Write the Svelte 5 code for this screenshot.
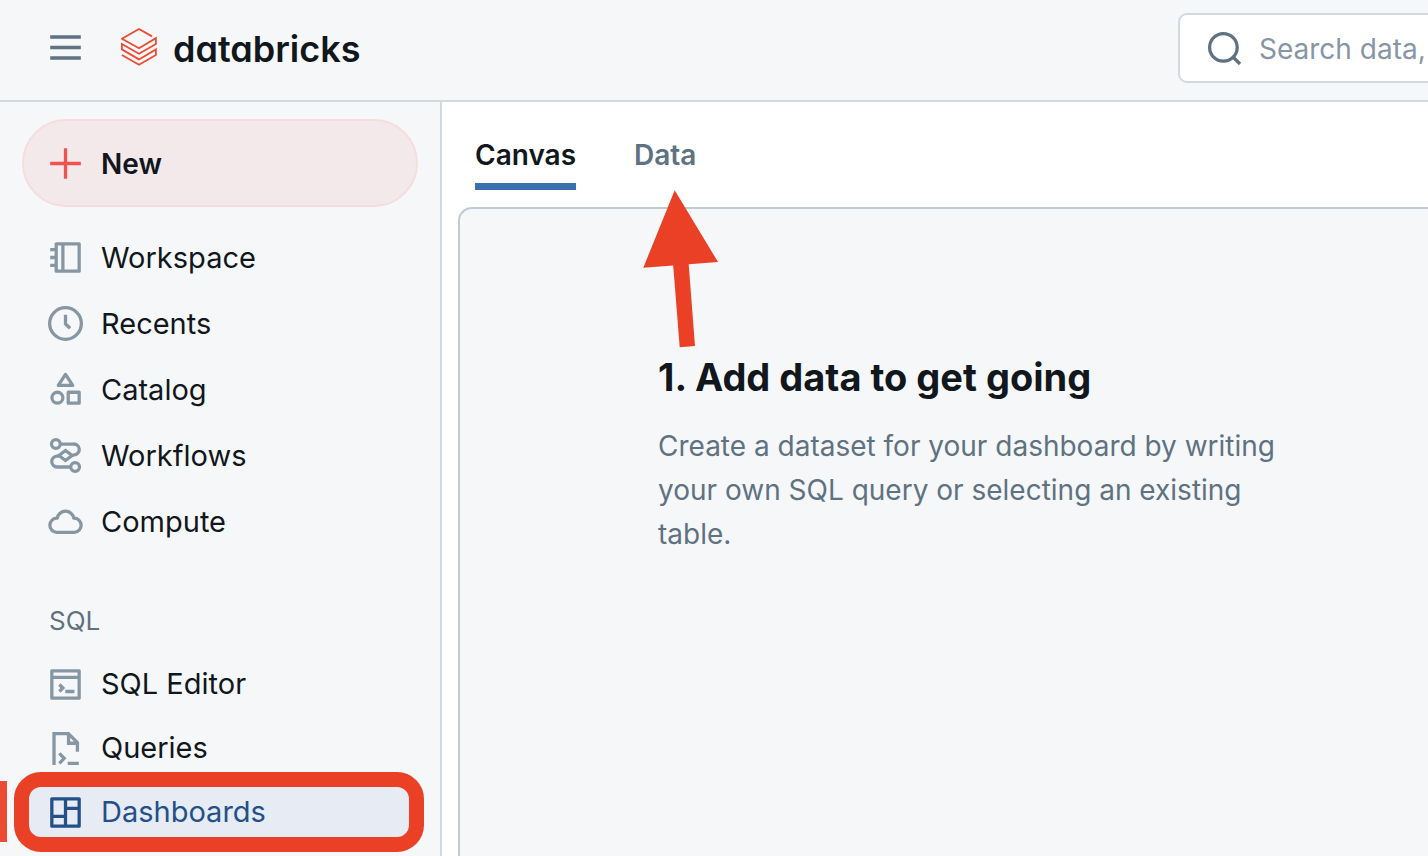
<script>
  const mainNav = [
    { label: 'Workspace', icon: 'workspace' },
    { label: 'Recents', icon: 'recents' },
    { label: 'Catalog', icon: 'catalog' },
    { label: 'Workflows', icon: 'workflows' },
    { label: 'Compute', icon: 'compute' }
  ];
  const sqlNav = [
    { label: 'SQL Editor', icon: 'editor' },
    { label: 'Queries', icon: 'queries' },
    { label: 'Dashboards', icon: 'dashboards' }
  ];
  let active = $state('Dashboards');
  let tab = $state('Canvas');
</script>

{#snippet glyph(name)}
  <svg class="icon" viewBox="0 0 16 16" fill="none" stroke="currentColor" stroke-width="1.5" aria-hidden="true">
    {#if name === 'menu'}
      <path d="M1 3.2h14M1 8h14M1 12.8h14" />
    {:else if name === 'search'}
      <circle cx="7.5" cy="7.5" r="6.3" />
      <path d="M11.9 11.9l3.2 3.2" />
    {:else if name === 'plus'}
      <path d="M8 1v14M1 8h14" />
    {:else if name === 'workspace'}
      <rect x="3.75" y="1.75" width="10.5" height="12.5" stroke-linejoin="round" />
      <path d="M6.8 2v12M1 4.4h2.5M1 8h2.5M1 11.6h2.5" />
    {:else if name === 'recents'}
      <circle cx="8" cy="8" r="7.25" />
      <path d="M8 4v4.2l2.1 2" />
    {:else if name === 'catalog'}
      <path d="M8 1.1L11.3 6.15H4.7z" stroke-linejoin="round" />
      <circle cx="4.3" cy="11.75" r="2.5" />
      <rect x="9.25" y="9.25" width="5" height="5" stroke-linejoin="round" />
    {:else if name === 'workflows'}
      <circle cx="3.6" cy="2.75" r="2" />
      <circle cx="12.4" cy="13.25" r="2" />
      <path d="M5.5 2.75h6.2a2.5 2.5 0 0 1 .2 5l-1 .3M10.5 13.25H4.3a2.5 2.5 0 0 1-.2-5l1-.3M8 5.7L11 8l-3 2.3L5 8z" />
    {:else if name === 'compute'}
      <path d="M4 13A3.25 3.25 0 0 1 4.2 6.5 A3.85 3.85 0 0 1 11.8 6.5 A3.25 3.25 0 0 1 12 13z" stroke-linejoin="round" />
    {:else if name === 'editor'}
      <rect x="1.75" y="1.75" width="12.5" height="12.5" stroke-linejoin="round" />
      <path d="M1.75 4.75h12.5M5.2 8l1.6 1.6-1.6 1.6M7.9 11.2h4.2" />
    {:else if name === 'queries'}
      <path d="M2.75 15.5V1.2h6.6l4.1 4.1v4.2M9.4 1.2v4.4h4M5.2 10.2l2.2 2.3-2.2 2.3M9 14.75h5.1" />
    {:else if name === 'dashboards'}
      <path d="M1.75 1.75h12.5v12.5H1.75zM8 1.75v12.5M1.75 9.8H8M8 6.1h6.25" stroke-linejoin="round" />
    {/if}
  </svg>
{/snippet}

{#snippet navList(items)}
  <ul>
    {#each items as item}
      <li class:marked={item.label === 'Dashboards'}>
        <a href="#{item.icon}" class:active={active === item.label} onclick={() => (active = item.label)}>
          {@render glyph(item.icon)}
          <span>{item.label}</span>
        </a>
      </li>
    {/each}
  </ul>
{/snippet}

<div class="page">
  <header>
    <button class="menu" aria-expanded="true">{@render glyph('menu')}</button>
    <a class="brand" href="#home">
      <svg viewBox="0 0 36 38" fill="none" stroke="#ee4b34" stroke-width="1.8" aria-hidden="true">
        <path d="M31 8.4L18 1L.9 10.8L18 20.2L34.9 10.2V16L18 25.8L.9 16V21.4L18 31.4L34.9 21.4V27L18 36.8L.9 27" />
      </svg>
      <span>databricks</span>
    </a>
    <label class="search">
      {@render glyph('search')}
      <input type="text" placeholder="Search data," />
    </label>
  </header>

  <div class="body">
    <aside>
      <button class="new">{@render glyph('plus')}<span>New</span></button>
      <nav class="primary">{@render navList(mainNav)}</nav>
      <h2>SQL</h2>
      <nav class="sql">{@render navList(sqlNav)}</nav>
    </aside>

    <main>
      <div class="tabs" role="tablist">
        {#each ['Canvas', 'Data'] as name}
          <button role="tab" aria-selected={tab === name} class:selected={tab === name} onclick={() => (tab = name)}>{name}</button>
        {/each}
        <svg class="arrow" viewBox="0 0 76 158" aria-hidden="true">
          <path fill="#ea4025" d="M31.7.3L75 72L45.7 74.2L52 156L36.7 157.3L30.2 75.4L.3 77.7z" />
        </svg>
      </div>
      <section>
        <h1>1. Add data to get going</h1>
        <p>Create a dataset for your dashboard by writing your own SQL query or selecting an existing table.</p>
      </section>
    </main>
  </div>
</div>

<style>
  :global(body) {
    margin: 0;
    background: #f6f7f9;
  }
  .page {
    display: flex;
    flex-direction: column;
    min-height: 100vh;
    overflow: hidden;
    color: #11171c;
    font: 28px/44px Inter, "Liberation Sans", sans-serif;
  }
  * {
    box-sizing: border-box;
  }
  button,
  input {
    font: inherit;
    color: inherit;
    background: none;
    border: 0;
    margin: 0;
    padding: 0;
  }
  button {
    cursor: pointer;
  }
  a {
    color: inherit;
    text-decoration: none;
  }
  ul {
    list-style: none;
    margin: 0;
    padding: 0;
  }
  .icon {
    display: block;
    flex: none;
    width: 35px;
    height: 35px;
  }
  header {
    display: flex;
    align-items: center;
    height: 102px;
    padding: 0 0 6px 48px;
    border-bottom: 2px solid #d1d9e1;
  }
  .menu {
    color: #5f7281;
  }
  .brand {
    display: flex;
    align-items: center;
    gap: 16px;
    margin-left: 38px;
    font-size: 36px;
    font-weight: 600;
    font-feature-settings: "cv11";
  }
  .brand span {
    padding-top: 4px;
  }
  .brand svg {
    width: 36px;
    height: 38px;
  }
  .search {
    display: flex;
    flex: none;
    align-items: center;
    gap: 17px;
    width: 280px;
    height: 70px;
    margin: 2px -30px 0 auto;
    padding-left: 27px;
    background: #fff;
    border: 2px solid #d1d9e1;
    border-radius: 9px;
    color: #5f7281;
  }
  .search input {
    flex: 1;
    min-width: 0;
    padding-top: 2px;
    outline: 0;
  }
  .search input::placeholder {
    color: #8796a5;
    opacity: 1;
  }
  .body {
    display: flex;
    flex: 1;
  }
  aside {
    flex: none;
    width: 442px;
    padding: 17px 22px 12px;
    border-right: 2px solid #d1d9e1;
  }
  .new {
    display: flex;
    align-items: center;
    gap: 18px;
    width: 100%;
    height: 88px;
    padding-left: 24px;
    background: #f4e9ea;
    border: 2px solid #f6dcde;
    border-radius: 44px;
    font-weight: 600;
  }
  .new span {
    padding-top: 2px;
  }
  .new .icon {
    color: #ee5350;
  }
  .primary {
    margin-top: 18px;
  }
  nav a {
    display: flex;
    align-items: center;
    gap: 18px;
    height: 66px;
    padding-left: 26px;
    font-size: 29px;
    font-weight: 400;
  }
  nav .icon {
    color: #8796a3;
  }
  .sql a {
    height: 64px;
  }
  .primary .icon {
    margin-bottom: 1px;
  }
  h2 {
    margin: 44px 0 9px 27px;
    color: #5f7281;
    font-size: 26px;
    font-weight: 400;
  }
  nav a.active,
  nav a.active .icon {
    color: #24508a;
  }
  nav a.active {
    background: #e6ebf4;
  }
  .marked {
    position: relative;
  }
  .marked::before {
    content: "";
    position: absolute;
    left: -22px;
    top: 1px;
    width: 7px;
    height: 61px;
    background: #ec4b33;
  }
  .marked::after {
    content: "";
    position: absolute;
    inset: -8px -6px -8px -8px;
    border: 15px solid #ea4025;
    border-radius: 27px;
    pointer-events: none;
  }
  main {
    display: flex;
    flex: 1;
    flex-direction: column;
    min-width: 0;
    background: #fff;
  }
  .tabs {
    position: relative;
    display: flex;
    gap: 58px;
    padding: 31px 33px 0;
  }
  .tabs button {
    padding-bottom: 6px;
    border-bottom: 7px solid transparent;
    color: #5f7281;
    font-weight: 600;
  }
  .tabs .selected {
    border-color: #3c6fae;
    color: #11171c;
  }
  .arrow {
    position: absolute;
    left: 201px;
    top: 88px;
    width: 76px;
    height: 158px;
  }
  section {
    flex: 1;
    margin: 17px 0 0 16px;
    padding: 144px 0 0 198px;
    background: #f6f7f9;
    border: 2px solid #c0cad6;
    border-width: 2px 0 0 2px;
    border-radius: 14px 0 0 0;
  }
  h1 {
    margin: 0 0 23px;
    font-size: 38px;
    line-height: 48px;
    font-weight: 700;
  }
  p {
    max-width: 640px;
    margin: 0;
    color: #5f7281;
  }
</style>
